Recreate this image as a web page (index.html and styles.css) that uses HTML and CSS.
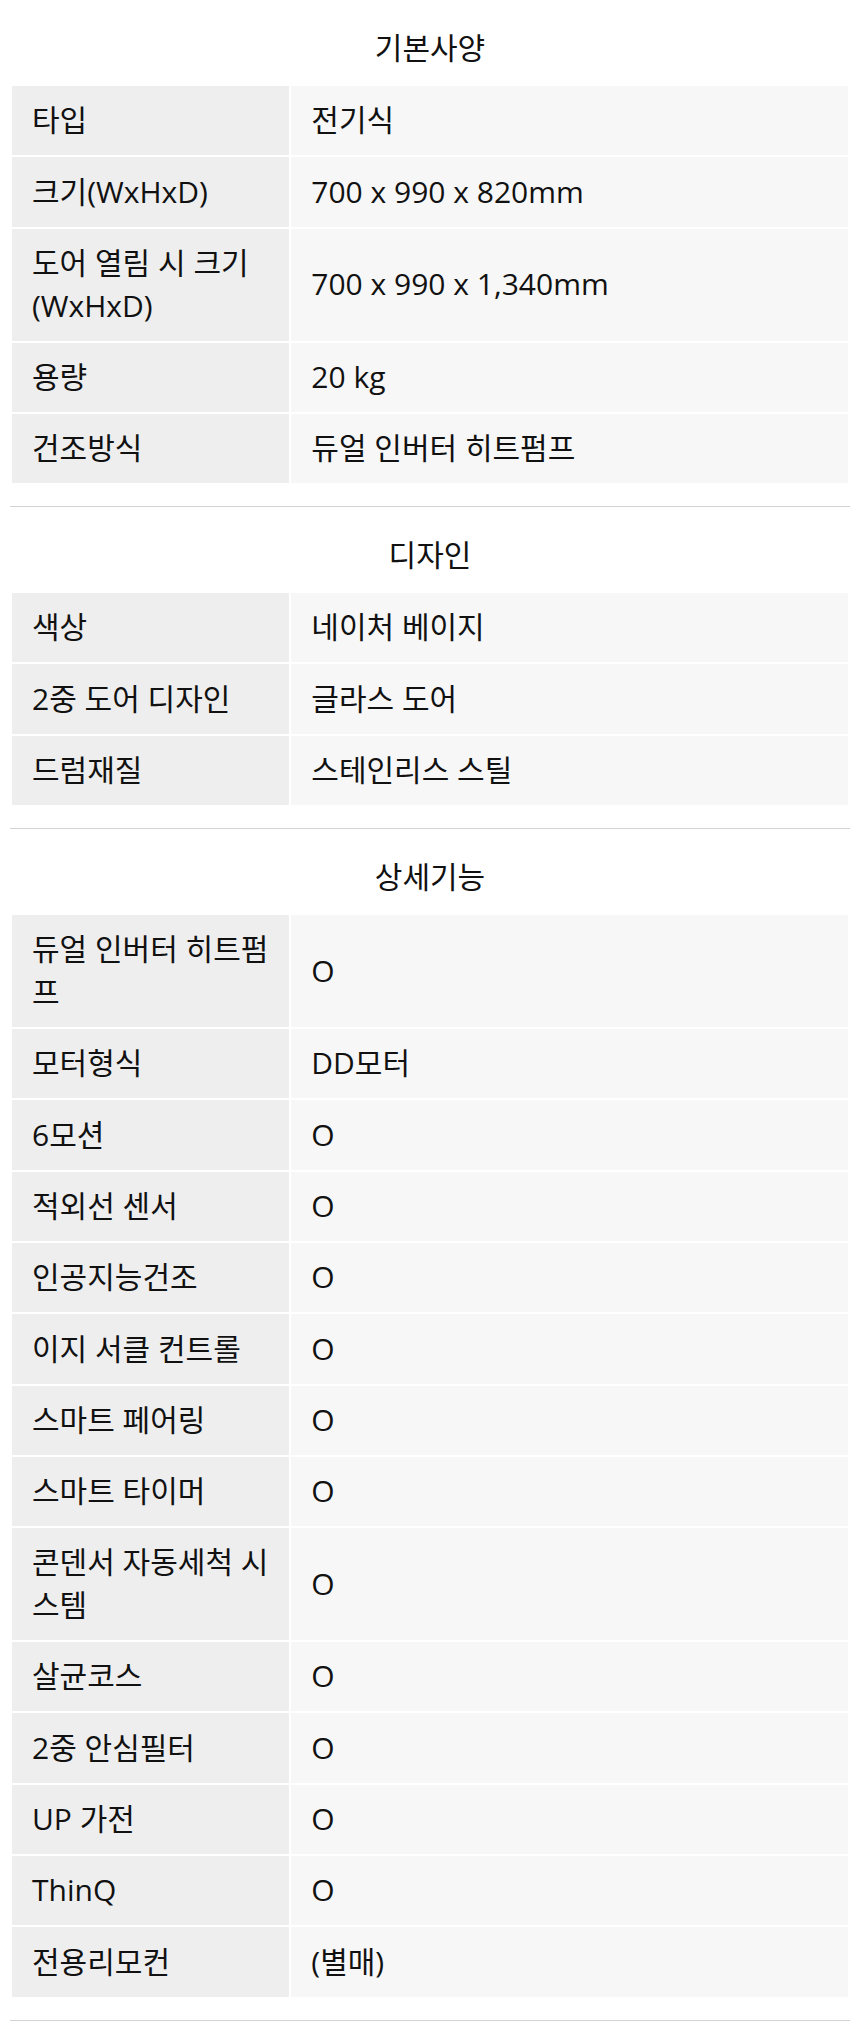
FILE: index.html
```html
<!DOCTYPE html>
<html lang="ko">
<head>
<meta charset="utf-8">
<title>제품 사양</title>
<link rel="stylesheet" href="styles.css">
</head>
<body>
<div class="spec">
  <section class="group">
    <h2 class="group-title">기본사양</h2>
    <table class="spec-table">
      <tr><th>타입</th><td>전기식</td></tr>
      <tr><th>크기(WxHxD)</th><td>700 x 990 x 820mm</td></tr>
      <tr><th>도어 열림 시 크기 (WxHxD)</th><td>700 x 990 x 1,340mm</td></tr>
      <tr><th>용량</th><td>20 kg</td></tr>
      <tr><th>건조방식</th><td>듀얼 인버터 히트펌프</td></tr>
    </table>
  </section>
  <section class="group">
    <h2 class="group-title">디자인</h2>
    <table class="spec-table">
      <tr><th>색상</th><td>네이처 베이지</td></tr>
      <tr><th>2중 도어 디자인</th><td>글라스 도어</td></tr>
      <tr><th>드럼재질</th><td>스테인리스 스틸</td></tr>
    </table>
  </section>
  <section class="group">
    <h2 class="group-title">상세기능</h2>
    <table class="spec-table">
      <tr><th>듀얼 인버터 히트펌프</th><td>O</td></tr>
      <tr><th>모터형식</th><td>DD모터</td></tr>
      <tr><th>6모션</th><td>O</td></tr>
      <tr><th>적외선 센서</th><td>O</td></tr>
      <tr><th>인공지능건조</th><td>O</td></tr>
      <tr><th>이지 서클 컨트롤</th><td>O</td></tr>
      <tr><th>스마트 페어링</th><td>O</td></tr>
      <tr><th>스마트 타이머</th><td>O</td></tr>
      <tr><th>콘덴서 자동세척 시스템</th><td>O</td></tr>
      <tr><th>살균코스</th><td>O</td></tr>
      <tr><th>2중 안심필터</th><td>O</td></tr>
      <tr><th>UP 가전</th><td>O</td></tr>
      <tr><th>ThinQ</th><td>O</td></tr>
      <tr><th>전용리모컨</th><td>(별매)</td></tr>
    </table>
  </section>
</div>
</body>
</html>
```

FILE: styles.css
```css
html, body {
  margin: 0;
  padding: 0;
  background: #ffffff;
}

body {
  font-family: "Open Sans", "Noto Sans CJK KR", sans-serif;
  color: #111111;
}

.spec {
  padding: 0 10px 14px;
}

.group {
  border-bottom: 1px solid #d3d3d3;
  padding-bottom: 21px;
}

.group-title {
  margin: 0;
  padding: 26px 0 15px;
  font-size: 30px;
  font-weight: normal;
  line-height: 43px;
  text-align: center;
}

.spec-table {
  width: 100%;
  border-collapse: separate;
  border-spacing: 2px;
  table-layout: fixed;
}

.spec-table th,
.spec-table td {
  box-sizing: border-box;
  padding: 13.3px 8px 13.3px 20px;
  font-size: 30px;
  font-weight: normal;
  line-height: 42.7px;
  text-align: left;
  vertical-align: middle;
}

.spec-table th {
  width: 33.25%;
  background: #eeeeee;
}

.spec-table td {
  background: #f7f7f7;
}
```
